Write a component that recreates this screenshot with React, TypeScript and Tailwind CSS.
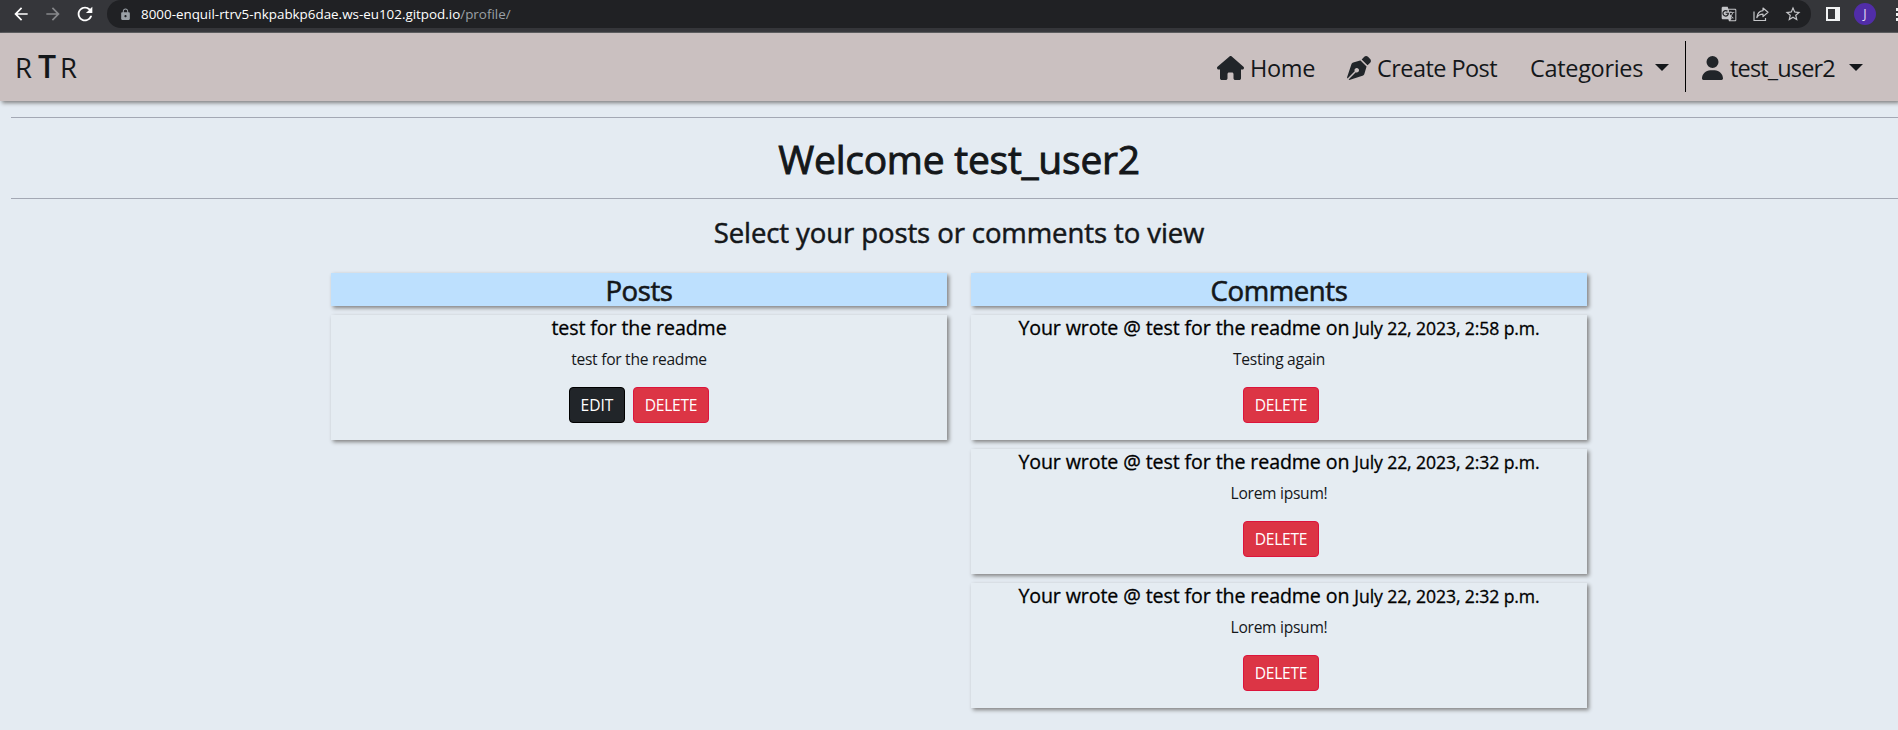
import type { ReactNode } from "react";
import { FaHouse, FaPenNib, FaUser } from "react-icons/fa6";
import {
  MdArrowBack,
  MdArrowForward,
  MdGTranslate,
  MdLock,
  MdRefresh,
  MdStarBorder,
} from "react-icons/md";

const comments = [
  { date: "July 22, 2023, 2:58 p.m.", body: "Testing again" },
  { date: "July 22, 2023, 2:32 p.m.", body: "Lorem ipsum!" },
  { date: "July 22, 2023, 2:32 p.m.", body: "Lorem ipsum!" },
];

function BrowserBar() {
  return (
    <div className="flex h-[33px] items-start border-b border-[#56575a] bg-[#35363a] text-white">
      <div className="flex h-7 w-[107px] shrink-0 items-center pl-[11px]">
        <MdArrowBack className="size-5" />
        <MdArrowForward className="ml-3 size-5 text-[#87888b]" />
        <MdRefresh className="ml-[11px] size-[22px]" />
      </div>
      <div className="flex h-7 flex-1 items-center rounded-l-[14px] rounded-r-[14px] bg-[#202124] pr-[9px] pl-3">
        <MdLock className="size-[13px] text-[#9aa0a6]" />
        <p className="ml-[9px] text-[13.4px] leading-7 whitespace-nowrap">
          8000-enquil-rtrv5-nkpabkp6dae.ws-eu102.gitpod.io
          <span className="text-[#9aa0a6]">/profile/</span>
        </p>
        <div className="ml-auto flex items-center text-[#c4c5c8]">
          <MdGTranslate className="size-4" />
          <svg viewBox="0 0 16 16" className="ml-4 size-4" fill="none" stroke="currentColor" strokeWidth="1.2">
            <path d="M1 5.5V14.5H12.5V12" />
            <path d="M10 2L15 6.3L10 10.6V8.2C7.2 8.2 5.2 9.2 3.8 11.6C4.2 7.8 6.3 5 10 4.6Z" strokeLinejoin="round" />
          </svg>
          <MdStarBorder className="ml-[15px] size-[18px]" />
        </div>
      </div>
      <div className="flex h-7 w-[87px] shrink-0 items-center overflow-hidden pl-[15px]">
        <div className="size-[14px] shrink-0 border-2 border-r-[5px] border-[#f1f3f4]" />
        <div className="ml-[14px] flex size-[22px] shrink-0 items-center justify-center rounded-full bg-[#512da8] text-[12.5px] text-[#e4dcf5]">
          J
        </div>
        <div className="ml-5 flex shrink-0 flex-col gap-[2px]">
          <span className="size-[3px] bg-[#f1f3f4]" />
          <span className="size-[3px] bg-[#f1f3f4]" />
          <span className="size-[3px] bg-[#f1f3f4]" />
        </div>
      </div>
    </div>
  );
}

function Caret() {
  return (
    <svg viewBox="0 0 14 7" className="mb-0.5 h-[7px] w-[14px]" fill="currentColor">
      <path d="M0 0H14L7 7Z" />
    </svg>
  );
}

function NavBar() {
  return (
    <nav className="relative flex h-[68px] bg-[#cac0c0] text-[23.5px] text-[#14171a] shadow-[2px_2px_4px_#808080]">
      <a className="flex items-baseline pt-[11px] pl-[15px] leading-[44px]">
        <span className="w-[23px] text-[27.5px]">R</span>
        <span className="w-[22px] text-[32px] font-semibold">T</span>
        <span className="text-[27.5px]">R</span>
      </a>
      <div className="ml-auto flex">
        <a className="flex w-[130px] items-center pt-0.5 tracking-[-0.35px]">
          <FaHouse className="mr-[6px] h-6 w-[27px] text-[#212529]" />
          <span className="pt-0.5">Home</span>
        </a>
        <a className="flex w-[182px] items-center pt-0.5 tracking-[-0.56px]">
          <FaPenNib className="mr-[6px] size-6 text-[#212529]" />
          <span className="pt-0.5">Create Post</span>
        </a>
        <a className="flex w-[156px] items-center pt-0.5 pr-4 pl-px tracking-[-0.32px]">
          <span className="pt-0.5">Categories</span>
          <span className="ml-auto">
            <Caret />
          </span>
        </a>
        <div className="mt-2 h-[51px] w-px bg-black" />
        <a className="flex w-[212px] items-center pt-0.5 pr-[35px] pl-4 tracking-[-0.84px]">
          <FaUser className="mr-[7px] h-6 w-[21px] text-[#212529]" />
          <span className="pt-0.5">test_user2</span>
          <span className="ml-auto">
            <Caret />
          </span>
        </a>
      </div>
    </nav>
  );
}

function Column({ title, children }: { title: string; children: ReactNode }) {
  return (
    <section className="flex w-[616px] flex-col gap-[9px]">
      <h3 className="h-[33px] bg-[#bde0fe] pt-px text-[27.5px] leading-[34px] font-medium tracking-[-0.4px] shadow-[2px_2px_4px_#808080] [-webkit-text-stroke:0.6px]">
        {title}
      </h3>
      {children}
    </section>
  );
}

function Card({ title, body, children }: { title: ReactNode; body: string; children: ReactNode }) {
  return (
    <article className="h-[125px] bg-[#e5ecf2] pt-px shadow-[2px_2px_4px_#808080]">
      <h4 className="h-6 text-[19.6px] leading-6 font-medium tracking-[-0.1px] text-black [-webkit-text-stroke:0.3px]">
        {title}
      </h4>
      <p className="mt-[7px] text-[15.6px] leading-6 tracking-[-0.28px] text-[#14171a]">{body}</p>
      <div className="mt-4 flex justify-center gap-2">{children}</div>
    </article>
  );
}

function DeleteButton() {
  return (
    <button className="h-9 w-[76px] rounded-[4px] border border-[#dc143c] bg-[#dc3545] pt-0.5 text-[15.6px] tracking-[-0.25px] text-white">
      DELETE
    </button>
  );
}

export default function App() {
  return (
    <div className="h-[730px] overflow-hidden bg-[#e4ebf2] font-['Open_Sans','Noto_Sans',sans-serif] text-[#14171a]">
      <BrowserBar />
      <NavBar />
      <main className="ml-[11px] w-[1896px] pt-4 text-center">
        <hr className="border-[#a3a8b4]" />
        <h1 className="h-20 pt-px text-[39px] leading-[80px] font-medium tracking-[-0.25px] [-webkit-text-stroke:0.9px]">
          Welcome test_user2
        </h1>
        <hr className="border-[#a3a8b4]" />
        <h2 className="mb-2 h-[66px] pt-px text-[27.5px] leading-[66px] font-medium tracking-[-0.09px] [-webkit-text-stroke:0.5px]">
          Select your posts or comments to view
        </h2>
        <div className="flex justify-center gap-6">
          <Column title="Posts">
            <Card title="test for the readme" body="test for the readme">
              <button className="h-9 w-14 rounded-[4px] border border-black bg-[#212529] pt-0.5 text-[15.6px] text-white">
                EDIT
              </button>
              <DeleteButton />
            </Card>
          </Column>
          <Column title="Comments">
            {comments.map((comment, index) => (
              <Card
                key={index}
                body={comment.body}
                title={
                  <>
                    Your wrote @ test for the readme on <span className="text-[17.6px]">{comment.date}</span>
                  </>
                }
              >
                <div className="pl-1">
                  <DeleteButton />
                </div>
              </Card>
            ))}
          </Column>
        </div>
      </main>
    </div>
  );
}
